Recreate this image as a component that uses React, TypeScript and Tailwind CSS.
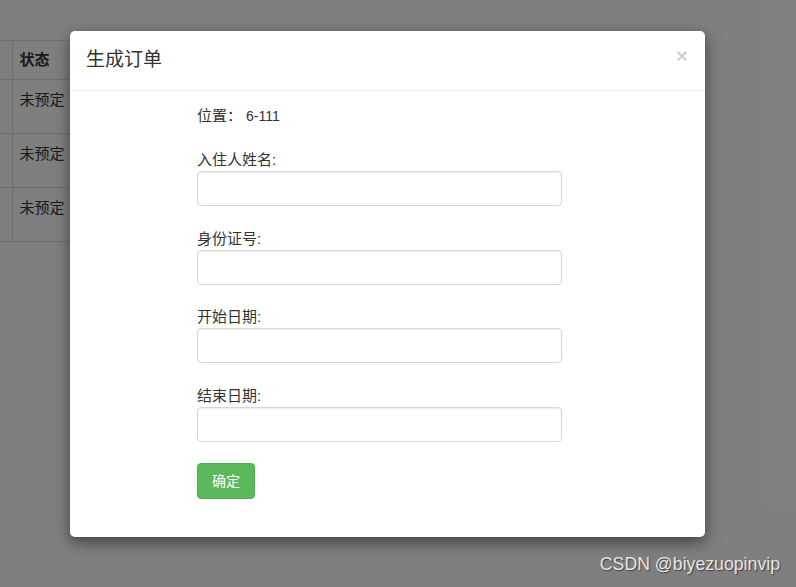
import React from 'react';

const rows = ['未预定', '未预定', '未预定'];

const fields = ['入住人姓名:', '身份证号:', '开始日期:', '结束日期:'];

const App: React.FC = () => {
  return (
    <div
      className="relative w-[796px] h-[587px] overflow-hidden bg-white"
      style={{ fontFamily: '"Liberation Sans", "Noto Sans CJK SC", sans-serif' }}
    >
      {/* page underneath */}
      <div className="pt-[40px]">
        <table className="w-[660px] border-collapse text-[15px] text-[#333]">
          <thead>
            <tr className="h-[39px] border-y border-[#dddddd]">
              <th className="w-[12px] border-r border-[#dddddd]" />
              <th className="px-[7px] text-left font-bold">状态</th>
            </tr>
          </thead>
          <tbody>
            {rows.map((r, i) => (
              <tr key={i} className="h-[54px] border-b border-[#dddddd]">
                <td className="border-r border-[#dddddd]" />
                <td className="px-[7px] pt-[9px] align-top">{r}</td>
              </tr>
            ))}
          </tbody>
        </table>
      </div>

      {/* backdrop */}
      <div className="absolute inset-0 bg-black/50" />

      {/* modal */}
      <div className="absolute left-[70px] top-[31px] w-[635px] h-[506px] rounded-[5px] bg-white shadow-[0_5px_15px_rgba(0,0,0,0.5)]">
        <div className="flex h-[60px] items-center justify-between border-b border-[#e3eeef] pl-[16px] pr-[17px]">
          <h4 className="text-[19px] text-[#333]">生成订单</h4>
          <span className="-mt-[10px] text-[21px] font-bold leading-none text-black/20">×</span>
        </div>
        <div className="pl-[127px] pt-[15px]">
          <div className="flex h-[20px] items-center text-[15px] text-[#333]">
            <span>位置：</span>
            <span className="ml-[4px] text-[14px]">6-111</span>
          </div>
          <div className="mt-[24px] flex w-[365px] flex-col gap-[22.7px]">
            {fields.map((f) => (
              <div key={f} className="flex flex-col gap-[1px]">
                <label className="h-[20px] text-[15px] leading-[20px] text-[#333]">{f}</label>
                <input className="h-[35px] w-full rounded-[4px] border border-[#d6d6d6] bg-white shadow-[inset_0_1px_1px_rgba(0,0,0,0.075)] outline-none" />
              </div>
            ))}
          </div>
          <button className="mt-[21px] flex h-[36px] w-[58px] items-center justify-center rounded-[4px] border border-[#4cae4c] bg-[#5cb85c] text-[14px] text-white">
            确定
          </button>
        </div>
      </div>

      {/* watermark */}
      <div className="absolute right-[16px] bottom-[9px] text-[17.7px] text-[#e6e6e6] [text-shadow:1px_1px_1px_rgba(0,0,0,0.5)]">
        CSDN @biyezuopinvip
      </div>
    </div>
  );
};

export default App;
